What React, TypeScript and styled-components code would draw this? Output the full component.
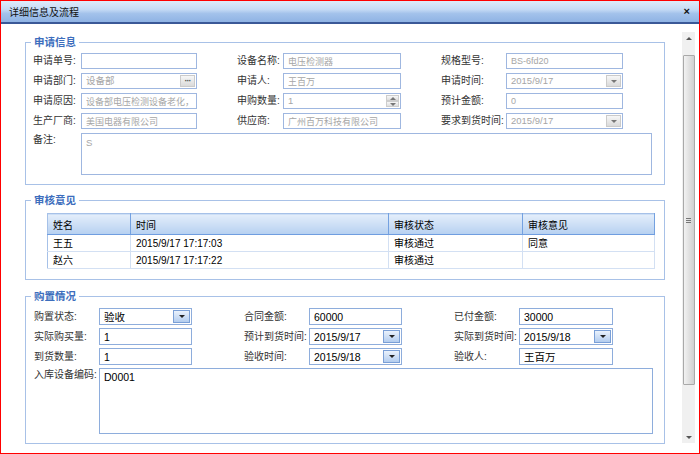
import React from 'react';
import styled, { createGlobalStyle } from 'styled-components';

const FONT = `"Liberation Sans", "Noto Sans CJK SC", sans-serif`;

const Global = createGlobalStyle`
  html, body { margin: 0; padding: 0; background: #fff; }
  body { font-family: ${FONT}; font-size: 10px; color: #333; }
  * { box-sizing: border-box; }
`;

const Window = styled.div`
  width: 700px;
  height: 454px;
  border: 1px solid #ff0000;
  display: flex;
  flex-direction: column;
  background: #fff;
  overflow: hidden;
`;

const TitleBar = styled.div`
  height: 23px;
  flex: none;
  display: flex;
  align-items: center;
  justify-content: space-between;
  padding: 0 9px 0 8px;
  background: linear-gradient(#dfebf9 0%, #c6dbf5 40%, #a3c2eb 60%, #8fb3e4 100%);
  border-bottom: 2px solid #3a5897;
  font-size: 10px;
  color: #111;
`;

const Close = styled.span`
  font-weight: bold;
  font-size: 11px;
  color: #111;
  line-height: 1;
`;

const Body = styled.div`
  flex: 1;
  display: flex;
  min-height: 0;
`;

const Main = styled.div`
  flex: 1;
  padding: 11px 0 0 24px;
`;

const Group = styled.fieldset<{ $mt: number; $pt: number; $pb: number }>`
  margin: ${p => p.$mt}px 0 0 0;
  padding: ${p => p.$pt}px 0 ${p => p.$pb}px 0;
  border: 1px solid #a8c1e7;
  width: 640px;
  min-width: 0;
`;

const Legend = styled.legend`
  margin-left: 5px;
  padding: 0 3px;
  color: #3d6ebd;
  font-weight: bold;
  font-size: 10.5px;
  line-height: 14px;
`;

const FieldGrid = styled.div<{ $cols: string; $gap: number; $rowGap: number; $left: number }>`
  display: grid;
  grid-template-columns: ${p => p.$cols};
  column-gap: ${p => p.$gap}px;
  row-gap: ${p => p.$rowGap}px;
  padding-left: ${p => p.$left}px;
`;

const Field = styled.div`
  display: flex;
  align-items: center;
`;

const Label = styled.span<{ $w: number }>`
  width: ${p => p.$w}px;
  flex: none;
  white-space: nowrap;
  color: #333;
  font-size: 10px;
  line-height: 14px;
`;

const TextInput = styled.input<{ $h: number; $dim?: boolean }>`
  flex: 1;
  min-width: 0;
  height: ${p => p.$h}px;
  border: 1px solid ${p => (p.$dim ? '#9fb7e0' : '#8eaddc')};
  padding: 0 4px;
  font-family: ${FONT};
  font-size: ${p => (p.$dim ? 9 : 10.5)}px;
  color: ${p => (p.$dim ? '#a6a6a6' : '#000')};
  background: #fff;
  outline: none;
`;

const Combo = styled.div<{ $h: number; $dim?: boolean }>`
  flex: 1;
  min-width: 0;
  height: ${p => p.$h}px;
  border: 1px solid ${p => (p.$dim ? '#9fb7e0' : '#8eaddc')};
  display: flex;
  align-items: center;
  padding-left: 4px;
  background: #fff;
  color: ${p => (p.$dim ? '#a6a6a6' : '#000')};
  font-size: ${p => (p.$dim ? 9.5 : 10.5)}px;
  line-height: 12px;
  overflow: hidden;
  white-space: nowrap;
`;

const ComboText = styled.span`
  flex: 1;
  min-width: 0;
  overflow: hidden;
`;

const Tri = styled.span<{ $up?: boolean; $c: string }>`
  width: 0;
  height: 0;
  border-left: 3px solid transparent;
  border-right: 3px solid transparent;
  ${p => (p.$up ? `border-bottom: 3px solid ${p.$c};` : `border-top: 3px solid ${p.$c};`)}
`;

const GrayBtn = styled.span`
  width: 15px;
  height: 12px;
  margin-right: 1px;
  flex: none;
  display: flex;
  align-items: center;
  justify-content: center;
  background: linear-gradient(#f7f7f7, #dadada);
  border: 1px solid #cbcbcb;
  color: #555;
  font-size: 9px;
  font-weight: bold;
  letter-spacing: -1px;
  line-height: 1;
`;

const BlueBtn = styled.span`
  width: 17px;
  height: 13px;
  margin-right: 1px;
  flex: none;
  display: flex;
  align-items: center;
  justify-content: center;
  background: linear-gradient(#eaf2fc, #b2ccef);
  border: 1px solid #7a9fd6;
`;

const Spin = styled.span`
  width: 13px;
  height: 12px;
  margin-right: 1px;
  flex: none;
  display: flex;
  flex-direction: column;
`;

const SpinHalf = styled.span`
  flex: 1;
  display: flex;
  align-items: center;
  justify-content: center;
  background: linear-gradient(#f7f7f7, #dedede);
  border: 1px solid #cdcdcd;
`;

const WideRow = styled.div<{ $mt: number; $left: number }>`
  display: flex;
  align-items: flex-start;
  margin-top: ${p => p.$mt}px;
  padding-left: ${p => p.$left}px;
`;

const Area = styled.div<{ $w: number; $h: number; $dim?: boolean }>`
  width: ${p => p.$w}px;
  height: ${p => p.$h}px;
  border: 1px solid ${p => (p.$dim ? '#9fb7e0' : '#8eaddc')};
  padding: 2px 4px;
  color: ${p => (p.$dim ? '#a6a6a6' : '#000')};
  font-size: ${p => (p.$dim ? 9.5 : 10.5)}px;
  line-height: 13px;
  background: #fff;
`;

const Table = styled.table`
  border-collapse: collapse;
  table-layout: fixed;
  width: 607px;
  margin-left: 21px;
  border: 1px solid #a6c1e8;
  font-size: 10px;
  color: #000;
`;

const Th = styled.th`
  height: 21px;
  padding: 0 0 0 5px;
  text-align: left;
  font-weight: normal;
  background: linear-gradient(#e4eefb, #b6d0f1);
  border-bottom: 1px solid #6f9de0;
  border-right: 1px solid #74a1e0;
`;

const Td = styled.td`
  height: 17px;
  padding: 0 0 0 5px;
  border-bottom: 1px solid #d3e0f3;
  border-right: 1px solid #d3e0f3;
  white-space: nowrap;
  line-height: 13px;
`;

const Scroll = styled.div`
  width: 13px;
  margin: 8px 4px 10px 0;
  background: #f0f0f0;
  display: flex;
  flex-direction: column;
  align-items: center;
`;

const ScrollArrow = styled.div<{ $h: number; $end?: boolean }>`
  height: ${p => p.$h}px;
  width: 100%;
  display: flex;
  justify-content: center;
  align-items: ${p => (p.$end ? 'flex-end' : 'flex-start')};
  padding: ${p => (p.$end ? '0 0 4px 0' : '5px 0 0 0')};
`;

const Thumb = styled.div`
  width: 12px;
  height: 330px;
  border: 1px solid #a9a9a9;
  border-radius: 1px;
  background: linear-gradient(90deg, #f2f2f2, #d0d0d0);
  display: flex;
  flex-direction: column;
  justify-content: center;
  align-items: center;
  gap: 1px;
`;

const Grip = styled.span`
  width: 5px;
  height: 1px;
  background: #777;
`;

const GRAY = '#777';

const Drop1: React.FC<{ text: string }> = ({ text }) => (
  <Combo $h={16} $dim>
    <ComboText>{text}</ComboText>
    <GrayBtn><Tri $c={GRAY} /></GrayBtn>
  </Combo>
);

const Drop3: React.FC<{ text: string }> = ({ text }) => (
  <Combo $h={17}>
    <ComboText>{text}</ComboText>
    <BlueBtn><Tri $c="#222" /></BlueBtn>
  </Combo>
);

const reviews = [
  { name: '王五', time: '2015/9/17 17:17:03', state: '审核通过', note: '同意' },
  { name: '赵六', time: '2015/9/17 17:17:22', state: '审核通过', note: '' },
];

export default function App() {
  return (
    <>
      <Global />
      <Window>
        <TitleBar>
          <span>详细信息及流程</span>
          <Close>×</Close>
        </TitleBar>
        <Body>
          <Main>
            <Group $mt={0} $pt={4} $pb={9}>
              <Legend>申请信息</Legend>
              <FieldGrid $cols="164px 164px 182px" $gap={40} $rowGap={4} $left={7}>
                <Field><Label $w={48}>申请单号:</Label><TextInput $h={16} $dim readOnly value="" /></Field>
                <Field><Label $w={46}>设备名称:</Label><TextInput $h={16} $dim readOnly value="电压检测器" /></Field>
                <Field><Label $w={65}>规格型号:</Label><TextInput $h={16} $dim readOnly value="BS-6fd20" /></Field>

                <Field><Label $w={48}>申请部门:</Label>
                  <Combo $h={16} $dim><ComboText>设备部</ComboText><GrayBtn>···</GrayBtn></Combo>
                </Field>
                <Field><Label $w={46}>申请人:</Label><TextInput $h={16} $dim readOnly value="王百万" /></Field>
                <Field><Label $w={65}>申请时间:</Label><Drop1 text="2015/9/17" /></Field>

                <Field><Label $w={48}>申请原因:</Label><TextInput $h={16} $dim readOnly value="设备部电压检测设备老化，" /></Field>
                <Field><Label $w={46}>申购数量:</Label>
                  <Combo $h={16} $dim><ComboText>1</ComboText>
                    <Spin><SpinHalf><Tri $up $c={GRAY} /></SpinHalf><SpinHalf><Tri $c={GRAY} /></SpinHalf></Spin>
                  </Combo>
                </Field>
                <Field><Label $w={65}>预计金额:</Label><TextInput $h={16} $dim readOnly value="0" /></Field>

                <Field><Label $w={48}>生产厂商:</Label><TextInput $h={16} $dim readOnly value="美国电器有限公司" /></Field>
                <Field><Label $w={46}>供应商:</Label><TextInput $h={16} $dim readOnly value="广州百万科技有限公司" /></Field>
                <Field><Label $w={65}>要求到货时间:</Label><Drop1 text="2015/9/17" /></Field>
              </FieldGrid>
              <WideRow $mt={4} $left={7}>
                <Label $w={48}>备注:</Label>
                <Area $w={571} $h={42} $dim>S</Area>
              </WideRow>
            </Group>

            <Group $mt={8} $pt={6} $pb={10}>
              <Legend>审核意见</Legend>
              <Table>
                <colgroup>
                  <col style={{ width: 83 }} />
                  <col style={{ width: 258 }} />
                  <col style={{ width: 134 }} />
                  <col style={{ width: 132 }} />
                </colgroup>
                <thead>
                  <tr><Th>姓名</Th><Th>时间</Th><Th>审核状态</Th><Th>审核意见</Th></tr>
                </thead>
                <tbody>
                  {reviews.map(r => (
                    <tr key={r.time}><Td>{r.name}</Td><Td>{r.time}</Td><Td>{r.state}</Td><Td>{r.note}</Td></tr>
                  ))}
                </tbody>
              </Table>
            </Group>

            <Group $mt={9} $pt={5} $pb={9}>
              <Legend>购置情况</Legend>
              <FieldGrid $cols="158px 158px 159px" $gap={52} $rowGap={3} $left={8}>
                <Field><Label $w={65}>购置状态:</Label><Drop3 text="验收" /></Field>
                <Field><Label $w={65}>合同金额:</Label><TextInput $h={17} readOnly value="60000" /></Field>
                <Field><Label $w={65}>已付金额:</Label><TextInput $h={17} readOnly value="30000" /></Field>

                <Field><Label $w={65}>实际购买量:</Label><TextInput $h={17} readOnly value="1" /></Field>
                <Field><Label $w={65}>预计到货时间:</Label><Drop3 text="2015/9/17" /></Field>
                <Field><Label $w={65}>实际到货时间:</Label><Drop3 text="2015/9/18" /></Field>

                <Field><Label $w={65}>到货数量:</Label><TextInput $h={17} readOnly value="1" /></Field>
                <Field><Label $w={65}>验收时间:</Label><Drop3 text="2015/9/18" /></Field>
                <Field><Label $w={65}>验收人:</Label><TextInput $h={17} readOnly value="王百万" /></Field>
              </FieldGrid>
              <WideRow $mt={3} $left={8}>
                <Label $w={65}>入库设备编码:</Label>
                <Area $w={554} $h={66}>D0001</Area>
              </WideRow>
            </Group>
          </Main>
          <Scroll>
            <ScrollArrow $h={23}><Tri $up $c="#555" /></ScrollArrow>
            <Thumb><Grip /><Grip /><Grip /></Thumb>
            <ScrollArrow $h={58} $end><Tri $c="#555" /></ScrollArrow>
          </Scroll>
        </Body>
      </Window>
    </>
  );
}
